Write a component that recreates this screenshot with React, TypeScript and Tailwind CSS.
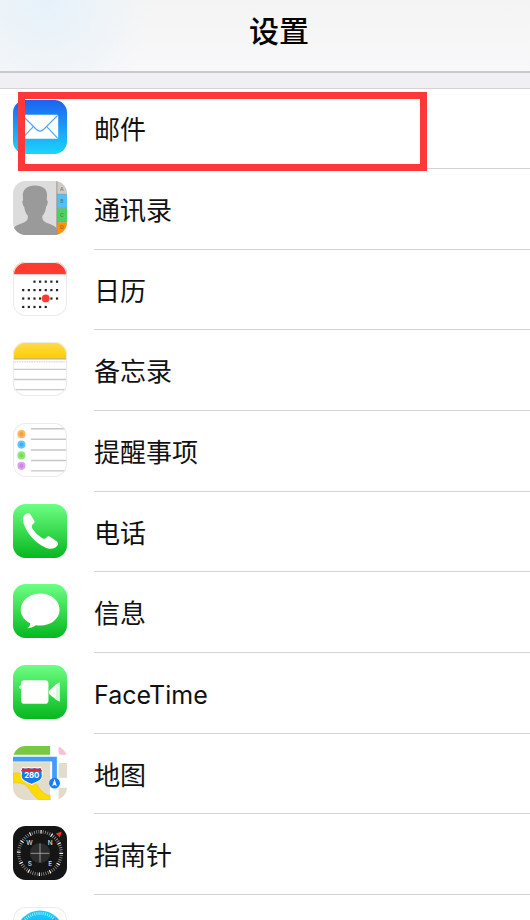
import type { ReactNode } from "react";

type IconProps = { id: string; children: ReactNode; outline?: boolean };

function IconFrame({ id, children, outline = false }: IconProps) {
  return (
    <svg viewBox="0 0 160 160" className="block size-[54px]" aria-hidden="true">
      <defs>
        <clipPath id={`${id}-clip`}>
          <rect width="160" height="160" rx="37" />
        </clipPath>
        <linearGradient id={`${id}-green`} x1="0" y1="0" x2="0" y2="1">
          <stop offset="0" stopColor="#6dff83" />
          <stop offset="1" stopColor="#06b71f" />
        </linearGradient>
      </defs>
      <g clipPath={`url(#${id}-clip)`}>{children}</g>
      {outline && (
        <rect x="1.5" y="1.5" width="157" height="157" rx="36" fill="none" stroke="#ebebeb" strokeWidth="3" />
      )}
    </svg>
  );
}

function MailIcon() {
  return (
    <IconFrame id="mail">
      <defs>
        <linearGradient id="mail-blue" x1="0" y1="0" x2="0" y2="1">
          <stop offset="0" stopColor="#1d62f0" />
          <stop offset="1" stopColor="#1ad5fd" />
        </linearGradient>
      </defs>
      <rect width="160" height="160" fill="url(#mail-blue)" />
      <rect x="26" y="44" width="108" height="71" rx="4" fill="#fff" />
      <g fill="none" stroke="#4fa9f7" strokeWidth="3.5">
        <path d="M28 46 L68 86 Q80 98 92 86 L132 46" />
        <path d="M28 113 L60 79 M132 113 L100 79" />
      </g>
    </IconFrame>
  );
}

function ContactsIcon() {
  return (
    <IconFrame id="contacts">
      <rect width="160" height="160" fill="#dcdcdc" />
      <path
        d="M65 13 C43 13 28 25 29 44 L30 56 C26 58 28 70 33 76 C35 90 40 99 44 103 C45 113 42 118 34 122 C22 128 4 130 0 143 V160 H130 V143 C126 130 108 128 96 122 C88 118 86 112 87 103 C93 97 97 88 98 76 C103 70 105 58 100 56 L101 42 C101 23 88 13 65 13 Z"
        fill="#9a9a9a"
      />
      <rect x="130" width="30" height="38" fill="#cdcbc3" />
      <rect x="130" y="39" width="30" height="41" fill="#55bef7" />
      <rect x="130" y="81" width="30" height="41" fill="#4cd35f" />
      <rect x="130" y="123" width="30" height="37" fill="#ff9209" />
      <path d="M130 0V160" stroke="#8e8e8a" strokeWidth="2.5" />
      <path d="M130 39H160 M130 81H160 M130 122H160" stroke="#777" strokeOpacity=".55" strokeWidth="2" />
      <g fontFamily="Inter, sans-serif" fontSize="15" fontWeight="600" textAnchor="middle" fill="#333" fillOpacity=".5">
        <text x="145" y="31">A</text>
        <text x="145" y="66">B</text>
        <text x="145" y="107">C</text>
        <text x="145" y="141">D</text>
      </g>
    </IconFrame>
  );
}

const calendarDots = [
  { y: 58, columns: [2, 3, 4, 5, 6] },
  { y: 83, columns: [0, 1, 2, 3, 4, 5, 6] },
  { y: 108, columns: [0, 1, 2, 3, 4, 5, 6] },
  { y: 133, columns: [0, 1, 2, 3, 4] },
];

function CalendarIcon() {
  return (
    <IconFrame id="calendar" outline>
      <rect width="160" height="160" fill="#fff" />
      {calendarDots.map((row) =>
        row.columns.map((c) => (
          <rect key={`${row.y}-${c}`} x={27 + c * 16.7} y={row.y - 3} width="6.5" height="6.5" fill="#222" />
        )),
      )}
      <circle cx="97" cy="108" r="11.5" fill="#ff3b30" />
      <path d="M0 0H160V36H0Z" fill="#ff3b30" />
    </IconFrame>
  );
}

function NotesIcon() {
  return (
    <IconFrame id="notes" outline>
      <defs>
        <linearGradient id="notes-yellow" x1="0" y1="0" x2="0" y2="1">
          <stop offset="0" stopColor="#ffdb4c" />
          <stop offset="1" stopColor="#ffcd02" />
        </linearGradient>
      </defs>
      <rect width="160" height="160" fill="#fff" />
      <rect width="160" height="49" fill="url(#notes-yellow)" />
      <path d="M0 50H160" stroke="#c5a96b" strokeWidth="3" />
      <path d="M2 59H160" stroke="#bdbdbd" strokeWidth="2.5" strokeDasharray="3 2" />
      <path d="M0 81H160 M0 111H160 M0 141H160" stroke="#c8c8c8" strokeWidth="4" />
    </IconFrame>
  );
}

const reminderDots = [
  { y: 33, fill: "#ff9f2e" },
  { y: 64, fill: "#33b1fa" },
  { y: 96, fill: "#71dc54" },
  { y: 127, fill: "#cf83e8" },
];

function RemindersIcon() {
  return (
    <IconFrame id="reminders" outline>
      <rect width="160" height="160" fill="#fff" />
      {reminderDots.map((dot) => (
        <g key={dot.y} fill={dot.fill}>
          <circle cx="25" cy={dot.y} r="12" fillOpacity=".75" />
          <circle cx="25" cy={dot.y} r="6" />
        </g>
      ))}
      <path d="M53 17H160 M53 48H160 M53 80H160 M53 111H160 M53 142H160" stroke="#c6c6c6" strokeWidth="4" />
    </IconFrame>
  );
}

function PhoneIcon() {
  return (
    <IconFrame id="phone">
      <rect width="160" height="160" fill="url(#phone-green)" />
      <path
        d="M33 34 C39 27 48 25 52 32 L63 49 C66 54 62 57 58 61 C53 66 56 72 61 78 C68 87 76 95 84 99 C91 104 94 104 99 99 C103 95 107 95 111 98 L129 110 C136 115 134 121 129 126 C121 134 108 135 94 128 C66 114 42 88 32 59 C28 48 28 40 33 34 Z"
        fill="#fff"
      />
    </IconFrame>
  );
}

function MessagesIcon() {
  return (
    <IconFrame id="messages">
      <rect width="160" height="160" fill="url(#messages-green)" />
      <path
        d="M81 28 C49 28 23 49 23 76 C23 93 34 108 51 116 C51 123 47 128 42 131 C52 131 61 127 67 122 C72 123 76 123 81 123 C113 123 138 102 138 76 C138 49 113 28 81 28 Z"
        fill="#fff"
      />
    </IconFrame>
  );
}

function FaceTimeIcon() {
  return (
    <IconFrame id="facetime">
      <rect width="160" height="160" fill="url(#facetime-green)" />
      <rect x="24" y="45" width="81" height="70" rx="10" fill="#fff" />
      <path d="M107 76 L128 57 V103 L107 86 Z" fill="#fff" />
      <path d="M127 57 L139 51 V109 L127 103 Z" fill="#fff" fillOpacity=".8" />
      <path d="M23 60 C16 62 16 70 23 71 Z" fill="#fff" />
    </IconFrame>
  );
}

function MapsIcon() {
  return (
    <IconFrame id="maps">
      <rect width="160" height="160" fill="#fff" />
      <rect width="110" height="26" fill="#78c840" />
      <path d="M135 0H160V26H142Q135 26 135 19Z" fill="#f8c3cf" />
      <rect y="48" width="110" height="112" fill="#e3dcca" />
      <path d="M135 52 Q140 50 147 50H160V94H135Z M135 124H160V160H135Z" fill="#e3dcca" />
      <path d="M0 80 C48 78 59 98 78 125 C88 139 99 146 110 147 V160 H78 C63 152 52 131 41 119 C30 108 15 109 0 109 Z" fill="#ffdc00" stroke="#efbd35" strokeWidth="2" />
      <path d="M0 39H123V102" fill="none" stroke="#429bff" strokeWidth="14" />
      <circle cx="123" cy="110" r="16" fill="#147efb" />
      <path d="M123 97 L130 119 L123 115 L116 119 Z" fill="#fff" />
      <path
        d="M29 63 Q38 68 46 63 Q55 68 64 63 Q72 68 81 63 L87 72 Q85 78 87 88 C87 103 70 107 55 114 C40 107 24 103 24 88 Q26 78 23 72 Z"
        fill="#147be9"
        stroke="#fff"
        strokeWidth="3"
      />
      <path d="M28 65 Q38 70 46 65 Q55 70 64 65 Q72 70 81 65 L85 74 H25 Z" fill="#d92734" />
      <text x="55.5" y="95" fontFamily="Inter, sans-serif" fontSize="23" fontWeight="700" textAnchor="middle" fill="#fff">
        280
      </text>
    </IconFrame>
  );
}

function CompassIcon() {
  return (
    <IconFrame id="compass">
      <rect width="160" height="160" fill="#151515" />
      <circle cx="80" cy="80" r="63" fill="none" stroke="#a6a6a6" strokeWidth="10" strokeDasharray="2 4.6" />
      <circle cx="80" cy="80" r="63" fill="none" stroke="#fff" strokeWidth="11" strokeDasharray="3 29.98" />
      <circle cx="80" cy="80" r="30" fill="#2c2c2c" />
      <path d="M52 81H108 M80 52V108" stroke="#c6c6c6" strokeWidth="2" />
      <path d="M127 22 L144 16 L139 34 Z" fill="#ff2b25" />
      <g fontFamily="Inter, sans-serif" fontSize="19" fontWeight="500" textAnchor="middle" fill="#dedede">
        <text x="49" y="56">W</text>
        <text x="110" y="56">N</text>
        <text x="50" y="119">S</text>
        <text x="110" y="119">E</text>
      </g>
    </IconFrame>
  );
}

function SafariIcon() {
  return (
    <IconFrame id="safari" outline>
      <defs>
        <linearGradient id="safari-blue" x1="0" y1="0" x2="0" y2="1">
          <stop offset="0" stopColor="#19d1fb" />
          <stop offset="1" stopColor="#1d6ff2" />
        </linearGradient>
      </defs>
      <rect width="160" height="160" fill="#fff" />
      <circle cx="80" cy="80" r="70" fill="url(#safari-blue)" />
      <circle cx="80" cy="80" r="61" fill="none" stroke="#fff" strokeOpacity=".75" strokeWidth="9" strokeDasharray="2 4.4" />
      <path d="M128 32 L90 88 L72 70 Z" fill="#ff3b30" />
      <path d="M32 128 L90 88 L72 70 Z" fill="#fff" />
    </IconFrame>
  );
}

const apps = [
  { name: "邮件", Icon: MailIcon, highlighted: true },
  { name: "通讯录", Icon: ContactsIcon },
  { name: "日历", Icon: CalendarIcon },
  { name: "备忘录", Icon: NotesIcon },
  { name: "提醒事项", Icon: RemindersIcon },
  { name: "电话", Icon: PhoneIcon },
  { name: "信息", Icon: MessagesIcon },
  { name: "FaceTime", Icon: FaceTimeIcon, latin: true },
  { name: "地图", Icon: MapsIcon },
  { name: "指南针", Icon: CompassIcon },
];

export default function App() {
  return (
    <div className="h-screen overflow-hidden bg-[#efeff4] font-[Inter,'Noto_Sans_CJK_SC',sans-serif] text-[#111]">
      <header className="flex h-[73px] justify-center border-b-2 border-[#c9c9cb] bg-[radial-gradient(circle_at_45px_0px,#e5f2fa_0px,#eff4f8_60px,transparent_110px),linear-gradient(#f4f4f4,#f8f8fa)] pt-[11px] pl-7">
        <h1 className="text-[30px] leading-10 font-medium text-black">设置</h1>
      </header>
      <main className="pt-[15px]">
        <ul className="bg-white shadow-[inset_0_1px_0_#d3d3d7]">
          {apps.map(({ name, Icon, highlighted, latin }) => (
            <li key={name} className="relative h-[81px] nth-[3n]:h-[80px]">
              <button type="button" className="flex h-full w-full gap-[27px] pl-[13px] text-left">
                <span className="shrink-0 self-start pt-3">
                  <Icon />
                </span>
                <span
                  className={`flex h-full flex-1 items-center border-b border-[#d3d3d6] pt-1 leading-9 ${
                    latin ? "text-[25px]" : "text-[26px]"
                  }`}
                >
                  {name}
                </span>
              </button>
              {highlighted && (
                <div className="pointer-events-none absolute top-1 left-[18px] z-10 h-[79px] w-[409px] border-[7px] border-[#fc3838]" />
              )}
            </li>
          ))}
          <li className="h-[81px]">
            <button type="button" aria-label="Safari" className="flex h-full w-full pt-3 pl-[13px]">
              <SafariIcon />
            </button>
          </li>
        </ul>
      </main>
    </div>
  );
}
